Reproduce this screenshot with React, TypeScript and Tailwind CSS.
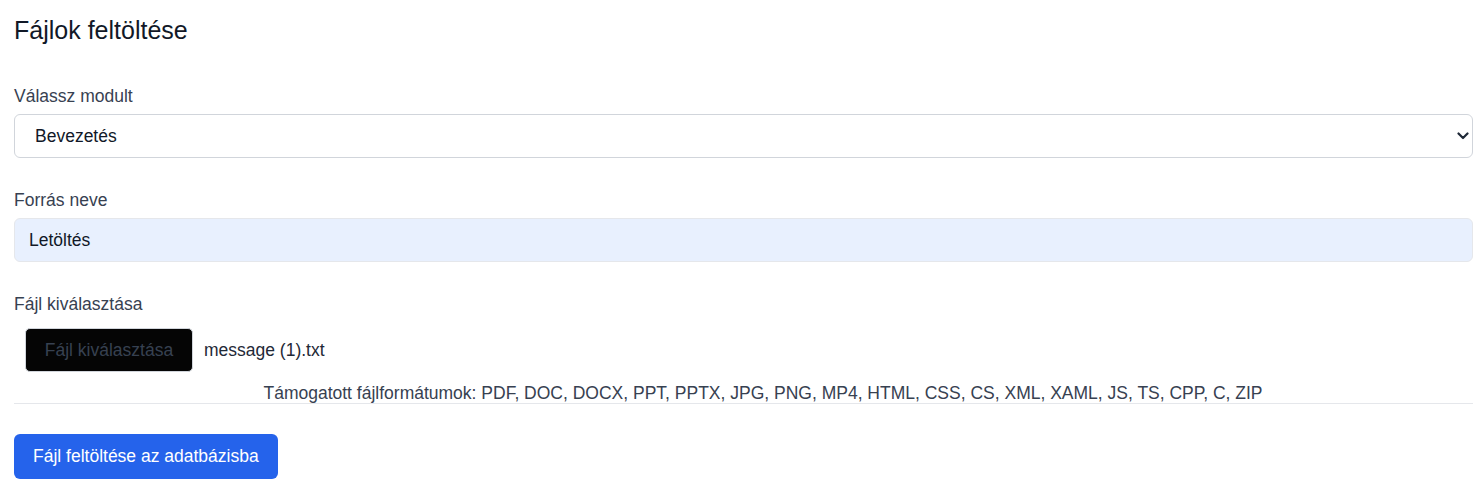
import React from "react";

export default function App() {
  return (
    <div className="min-h-[488px] bg-white pl-[14px] pr-[8px] pt-[16px] text-[17.5px] text-[#374151]" style={{ fontFamily: '"Liberation Sans", Arial, sans-serif' }}>
      <h1 className="text-[25px] leading-[28px] text-[#111827]">Fájlok feltöltése</h1>

      <div className="mt-[40px]">
        <label className="block leading-[24px]">Válassz modult</label>
        <div className="relative mt-[6px]">
          <select
            defaultValue="Bevezetés"
            className="block h-[44px] w-full appearance-none rounded-[6px] border border-[#d1d5db] bg-white pl-[20px] pr-[40px] text-[17.5px] text-[#111827] outline-none"
            style={{ fontFamily: '"Liberation Sans", Arial, sans-serif' }}
          >
            <option>Bevezetés</option>
          </select>
          <svg className="pointer-events-none absolute right-[4px] top-1/2 -translate-y-1/2" width="12" height="8" viewBox="0 0 12 8" fill="none">
            <path d="M1.5 1.5L6 6L10.5 1.5" stroke="#1f2937" strokeWidth="2.2" strokeLinecap="round" strokeLinejoin="round" />
          </svg>
        </div>
      </div>

      <div className="mt-[30px]">
        <label className="block leading-[24px]">Forrás neve</label>
        <input
          defaultValue="Letöltés"
          className="mt-[6px] block h-[44px] w-full rounded-[6px] border border-[#e5e7eb] bg-[#e8f0fe] px-[14px] text-[17.5px] text-[#111827] outline-none"
          style={{ fontFamily: '"Liberation Sans", Arial, sans-serif' }}
        />
      </div>

      <div className="mt-[30px]">
        <label className="block leading-[24px]">Fájl kiválasztása</label>
        <div className="mt-[12px] flex items-center pl-[11px]">
          <div className="flex h-[44px] w-[168px] items-center justify-center rounded-[5px] border border-[#d1d5db] bg-[#050505] text-[#374151]">
            Fájl kiválasztása
          </div>
          <span className="ml-[11px] text-[#1f2937]">message (1).txt</span>
        </div>
        <div className="mt-[11px] border-b border-[#e5e7eb] pl-[39px] text-center leading-[20px] text-[#374151]">
          Támogatott fájlformátumok: PDF, DOC, DOCX, PPT, PPTX, JPG, PNG, MP4, HTML, CSS, CS, XML, XAML, JS, TS, CPP, C, ZIP
        </div>
      </div>

      <button className="mt-[30px] h-[45px] rounded-[6px] bg-[#2563eb] px-[19px] text-[17.5px] text-white" style={{ fontFamily: '"Liberation Sans", Arial, sans-serif' }}>
        Fájl feltöltése az adatbázisba
      </button>
    </div>
  );
}
